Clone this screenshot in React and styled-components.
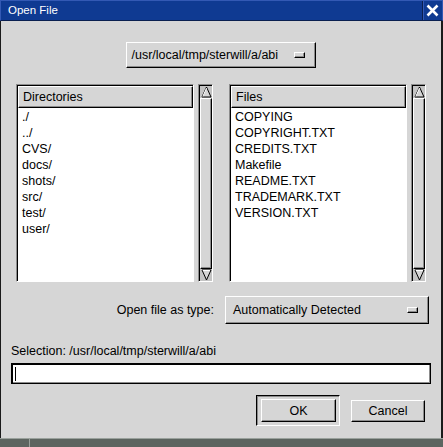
import React from "react";
import styled, { createGlobalStyle } from "styled-components";

const Global = createGlobalStyle`
  html, body { margin: 0; padding: 0; background: #d6d6d6; overflow: hidden; }
  * { box-sizing: border-box; }
`;

const Window = styled.div`
  width: 443px;
  height: 447px;
  display: flex;
  flex-direction: column;
  font-family: "Liberation Sans", Arial, sans-serif;
  font-size: 12.5px;
  color: #000;
  background: #d6d6d6;
`;

const TitleBar = styled.div`
  height: 21px;
  display: flex;
  background: #0f3a92;
  border: 1px solid #3359b4;
  border-bottom: 1px solid #0a1f50;
`;

const Title = styled.div`
  flex: 1;
  color: #fff;
  font-family: "Liberation Sans", Arial, sans-serif;
  font-size: 11.5px;
  line-height: 19px;
  padding-left: 7px;
`;

const CloseBox = styled.div`
  width: 20px;
  border-left: 1px solid #0a1f50;
  box-shadow: inset 1px 0 #3359b4;
  display: flex;
  align-items: center;
  justify-content: center;
`;

const Body = styled.div`
  flex: 1;
  display: flex;
  flex-direction: column;
  padding: 0 11px 0 10px;
  border-left: 1px solid #1a1a1a;
  border-right: 2px solid #1a1a1a;
`;

const raised = `
  border: 1px solid;
  border-color: #fff #000 #000 #fff;
  box-shadow: inset -1px -1px #8c8c8c;
  background: #d6d6d6;
`;

const OptionMenu = styled.div`
  ${raised}
  width: ${(p) => p.$w}px;
  height: ${(p) => p.$h}px;
  display: flex;
  align-items: center;
  justify-content: space-between;
  padding: 0 10px 0 ${(p) => p.$pl}px;
  align-self: ${(p) => p.$self || "auto"};
  margin-top: ${(p) => p.$mt || 0}px;
`;

const Indicator = styled.span`
  width: 11px;
  height: 6px;
  border: 1px solid;
  border-color: #fff #000 #000 #fff;
  box-shadow: inset -1px -1px #8c8c8c;
`;

const ListsRow = styled.div`
  display: flex;
  gap: 16px;
  margin-top: 16px;
  padding: 0 4px 0 5px;
  height: 198px;
`;

const Pane = styled.div`
  flex: 1;
  display: flex;
  gap: 4px;
`;

const List = styled.div`
  flex: 1;
  background: #fff;
  border: 1px solid;
  border-color: #8c8c8c #fff #fff #8c8c8c;
  box-shadow: inset 1px 1px #000;
  padding: 1px 0 0 1px;
  display: flex;
  flex-direction: column;
`;

const Header = styled.div`
  ${raised}
  height: 22px;
  line-height: 20px;
  padding-left: 4px;
  border-bottom-color: #000;
`;

const Items = styled.div`
  padding: 1px 0 0 4px;
`;

const Item = styled.div`
  height: 16px;
  line-height: 16px;
`;

const Scrollbar = styled.div`
  width: 15px;
  border: 1px solid;
  border-color: #8c8c8c #fff #fff #8c8c8c;
  box-shadow: inset 1px 1px #000;
  padding: 1px 0 0 1px;
  display: flex;
  flex-direction: column;
  background: #c4c4c4;
`;

const Arrow = styled.div`
  height: 12px;
  display: flex;
  justify-content: center;
`;

const Thumb = styled.div`
  ${raised}
  flex: 1;
`;

const TypeRow = styled.div`
  display: flex;
  justify-content: flex-end;
  align-items: center;
  gap: 11px;
  margin-top: 14px;
  padding-right: 1px;
`;

const Label = styled.div`
  margin-top: ${(p) => p.$mt || 0}px;
  line-height: 14px;
`;

const Input = styled.div`
  margin-top: 5px;
  height: 21px;
  background: #fff;
  border: 1px solid #000;
  box-shadow: inset 1px 1px #000, inset -1px -1px #8c8c8c;
  margin-right: -1px;
  padding: 3px 0 0 3px;
`;

const Caret = styled.div`
  width: 1px;
  height: 14px;
  background: #000;
`;

const ButtonRow = styled.div`
  display: flex;
  justify-content: flex-end;
  align-items: center;
  gap: 11px;
  margin-top: 11px;
  padding-right: 5px;
`;

const DefaultFrame = styled.div`
  width: 84px;
  height: 31px;
  border: 1px solid;
  border-color: #000 #fff #fff #000;
  box-shadow: inset 1px 1px #8c8c8c;
  padding: 3px 3px 3px 4px;
`;

const Button = styled.div`
  ${raised}
  width: ${(p) => p.$w}px;
  height: ${(p) => p.$h}px;
  display: flex;
  align-items: center;
  justify-content: center;
`;

const Taskbar = styled.div`
  height: 9px;
  background: #5d6560;
  border-top: 1px solid #9aa19c;
  display: flex;
`;

const TaskSep = styled.div`
  width: 30px;
  border-right: 1px solid #9aa19c;
`;

const UpArrow = () => (
  <svg width="11" height="12" viewBox="0 0 11 12">
    <polygon points="5.5,1 10,11 1,11" fill="#d6d6d6" stroke="#000" strokeWidth="1" />
    <line x1="5.5" y1="2" x2="1.8" y2="10.5" stroke="#fff" />
  </svg>
);

const DownArrow = () => (
  <svg width="11" height="12" viewBox="0 0 11 12">
    <polygon points="1,1 10,1 5.5,11" fill="#d6d6d6" stroke="#000" strokeWidth="1" />
    <line x1="1.8" y1="1.5" x2="9" y2="1.5" stroke="#fff" />
  </svg>
);

const ListPane = ({ title, items }) => (
  <Pane>
    <List>
      <Header>{title}</Header>
      <Items>
        {items.map((i) => (
          <Item key={i}>{i}</Item>
        ))}
      </Items>
    </List>
    <Scrollbar>
      <Arrow><UpArrow /></Arrow>
      <Thumb />
      <Arrow><DownArrow /></Arrow>
    </Scrollbar>
  </Pane>
);

const dirs = ["./", "../", "CVS/", "docs/", "shots/", "src/", "test/", "user/"];
const files = [
  "COPYING",
  "COPYRIGHT.TXT",
  "CREDITS.TXT",
  "Makefile",
  "README.TXT",
  "TRADEMARK.TXT",
  "VERSION.TXT",
];

export default function App() {
  return (
    <Window>
      <Global />
      <TitleBar>
        <Title>Open File</Title>
        <CloseBox>
          <svg width="13" height="13" viewBox="0 0 13 13">
            <path d="M1.5 1.5 L11.5 11.5 M11.5 1.5 L1.5 11.5" stroke="#fff" strokeWidth="2.6" />
          </svg>
        </CloseBox>
      </TitleBar>
      <Body>
        <OptionMenu $w={190} $h={26} $pl={5} $self="center" $mt={21}>
          <span>/usr/local/tmp/sterwill/a/abi</span>
          <Indicator />
        </OptionMenu>
        <ListsRow>
          <ListPane title="Directories" items={dirs} />
          <ListPane title="Files" items={files} />
        </ListsRow>
        <TypeRow>
          <Label>Open file as type:</Label>
          <OptionMenu $w={204} $h={28} $pl={7}>
            <span>Automatically Detected</span>
            <Indicator />
          </OptionMenu>
        </TypeRow>
        <Label $mt={20}>Selection: /usr/local/tmp/sterwill/a/abi</Label>
        <Input>
          <Caret />
        </Input>
        <ButtonRow>
          <DefaultFrame>
            <Button $w={75} $h={23}>OK</Button>
          </DefaultFrame>
          <Button $w={74} $h={22}>Cancel</Button>
        </ButtonRow>
      </Body>
      <Taskbar>
        <TaskSep />
      </Taskbar>
    </Window>
  );
}
